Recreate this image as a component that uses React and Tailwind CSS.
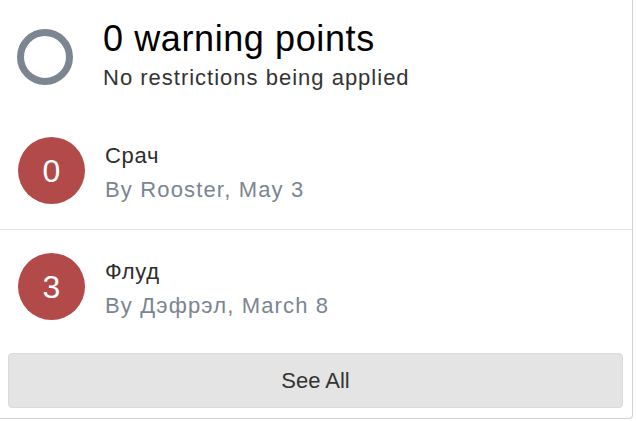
import React from 'react'

const warnings = [
  { points: 0, title: 'Срач', by: 'Rooster', date: 'May 3' },
  { points: 3, title: 'Флуд', by: 'Дэфрэл', date: 'March 8' },
]

function WarningRow({ item, last }) {
  return (
    <div className={`flex pl-[18px] ${last ? 'h-[115px]' : 'h-[116px] border-b border-[#e5e5e5]'}`}>
      <div className="mt-[23px] flex h-[67px] w-[67px] shrink-0 items-center justify-center rounded-full bg-[#b24a4a] text-[32px] leading-none text-white">
        {item.points}
      </div>
      <div className="ml-[20px] pt-[29px]">
        <p className="text-[22px] leading-[26px] tracking-[0.7px] text-[#2d2d2d]">{item.title}</p>
        <p className="mt-[8px] text-[22px] leading-[26px] tracking-[1.15px] text-[#7a8591]">
          By {item.by}, {item.date}
        </p>
      </div>
    </div>
  )
}

export default function App() {
  return (
    <div className="h-[421px] w-[636px] overflow-hidden bg-white font-['Liberation_Sans',Arial,sans-serif]">
      <div className="flex h-[419px] w-[633px] flex-col rounded-br-[4px] border-r border-b border-[#d2d2d2] bg-white">
        {/* Header */}
        <div className="flex h-[114px] pl-[17px] pt-[19px]">
          <div className="mt-[10px] h-[56px] w-[56px] shrink-0 rounded-full border-[7px] border-[#7c8590]" />
          <div className="ml-[30px]">
            <h2 className="text-[36px] leading-[40px] tracking-[0.6px] text-black">0 warning points</h2>
            <p className="mt-[6px] text-[22px] leading-[26px] tracking-[1px] text-[#333]">
              No restrictions being applied
            </p>
          </div>
        </div>

        {/* Rows */}
        {warnings.map((w, i) => (
          <WarningRow key={i} item={w} last={i === warnings.length - 1} />
        ))}

        {/* Footer */}
        <div className="ml-[8px] mr-[9px] mt-[8px]">
          <button className="flex h-[55px] w-full items-center justify-center rounded-[4px] border border-[#dadada] bg-[#e4e4e4] text-[22px] text-[#333]">
            See All
          </button>
        </div>
      </div>
    </div>
  )
}
